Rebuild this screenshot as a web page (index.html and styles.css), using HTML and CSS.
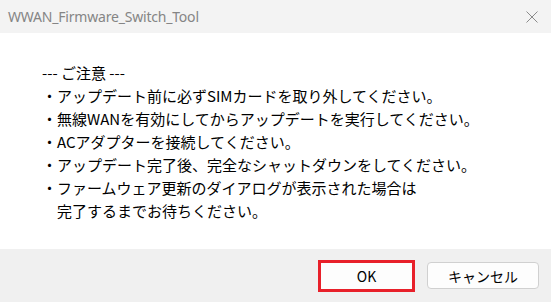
FILE: index.html
```html
<!DOCTYPE html>
<html lang="ja">
<head>
    <meta charset="UTF-8">
    <meta name="viewport" content="width=device-width, initial-scale=1.0">
    <title>WWAN_Firmware_Switch_Tool</title>
    <link rel="stylesheet" href="styles.css">
</head>
<body>
    <div class="dialog">
        <!-- タイトルバー -->
        <div class="titlebar">
            <span class="title">WWAN_Firmware_Switch_Tool</span>
            <button class="close-btn" aria-label="閉じる">
                <svg width="12" height="12" viewBox="0 0 12 12">
                    <path d="M0.5 0.5 L11.5 11.5 M11.5 0.5 L0.5 11.5" stroke="#8a8a8a" stroke-width="1" fill="none"/>
                </svg>
            </button>
        </div>

        <!-- メッセージ -->
        <div class="content">
            <p class="line">--- ご注意 ---</p>
            <p class="line">・アップデート前に必ずSIMカードを取り外してください。</p>
            <p class="line">・無線WANを有効にしてからアップデートを実行してください。</p>
            <p class="line">・ACアダプターを接続してください。</p>
            <p class="line">・アップデート完了後、完全なシャットダウンをしてください。</p>
            <p class="line">・ファームウェア更新のダイアログが表示された場合は</p>
            <p class="line indent">完了するまでお待ちください。</p>
        </div>

        <!-- ボタン -->
        <div class="footer">
            <button class="btn btn-ok">OK</button>
            <button class="btn">キャンセル</button>
        </div>
    </div>
</body>
</html>
```

FILE: styles.css
```css
body {
    margin: 0;
    font-family: 'Noto Sans CJK JP', sans-serif;
    background-color: #ffffff;
    overflow: hidden;
}

.dialog {
    display: flex;
    flex-direction: column;
    height: 100vh;
}

.titlebar {
    height: 33px;
    background-color: #f3f3f3;
    display: flex;
    align-items: center;
    justify-content: space-between;
    padding-left: 8px;
    flex-shrink: 0;
}

.title {
    font-family: 'Noto Sans', sans-serif;
    font-size: 14px;
    color: #858585;
    letter-spacing: -0.2px;
}

.close-btn {
    width: 38px;
    height: 33px;
    border: none;
    background: none;
    padding: 0;
    display: flex;
    align-items: center;
    justify-content: center;
}

.content {
    flex: 1;
    padding: 28px 0 0 42px;
}

.line {
    margin: 0;
    font-size: 15px;
    line-height: 23px;
    color: #000000;
    white-space: nowrap;
}

.indent {
    padding-left: 15px;
}

.footer {
    height: 53px;
    background-color: #f0f0f0;
    display: flex;
    align-items: center;
    justify-content: flex-end;
    gap: 12px;
    padding-right: 12px;
    flex-shrink: 0;
}

.btn {
    width: 112px;
    height: 27px;
    background-color: #fdfdfd;
    border: 1px solid #d0d0d0;
    border-radius: 4px;
    font-family: 'Noto Sans CJK JP', sans-serif;
    font-size: 14px;
    color: #000000;
    padding: 0;
}

/* 赤枠で強調 */
.btn-ok {
    width: 97px;
    height: 32px;
    border: 3px solid #e8202a;
    border-radius: 0;
    background-color: #fdfdfd;
}
```
